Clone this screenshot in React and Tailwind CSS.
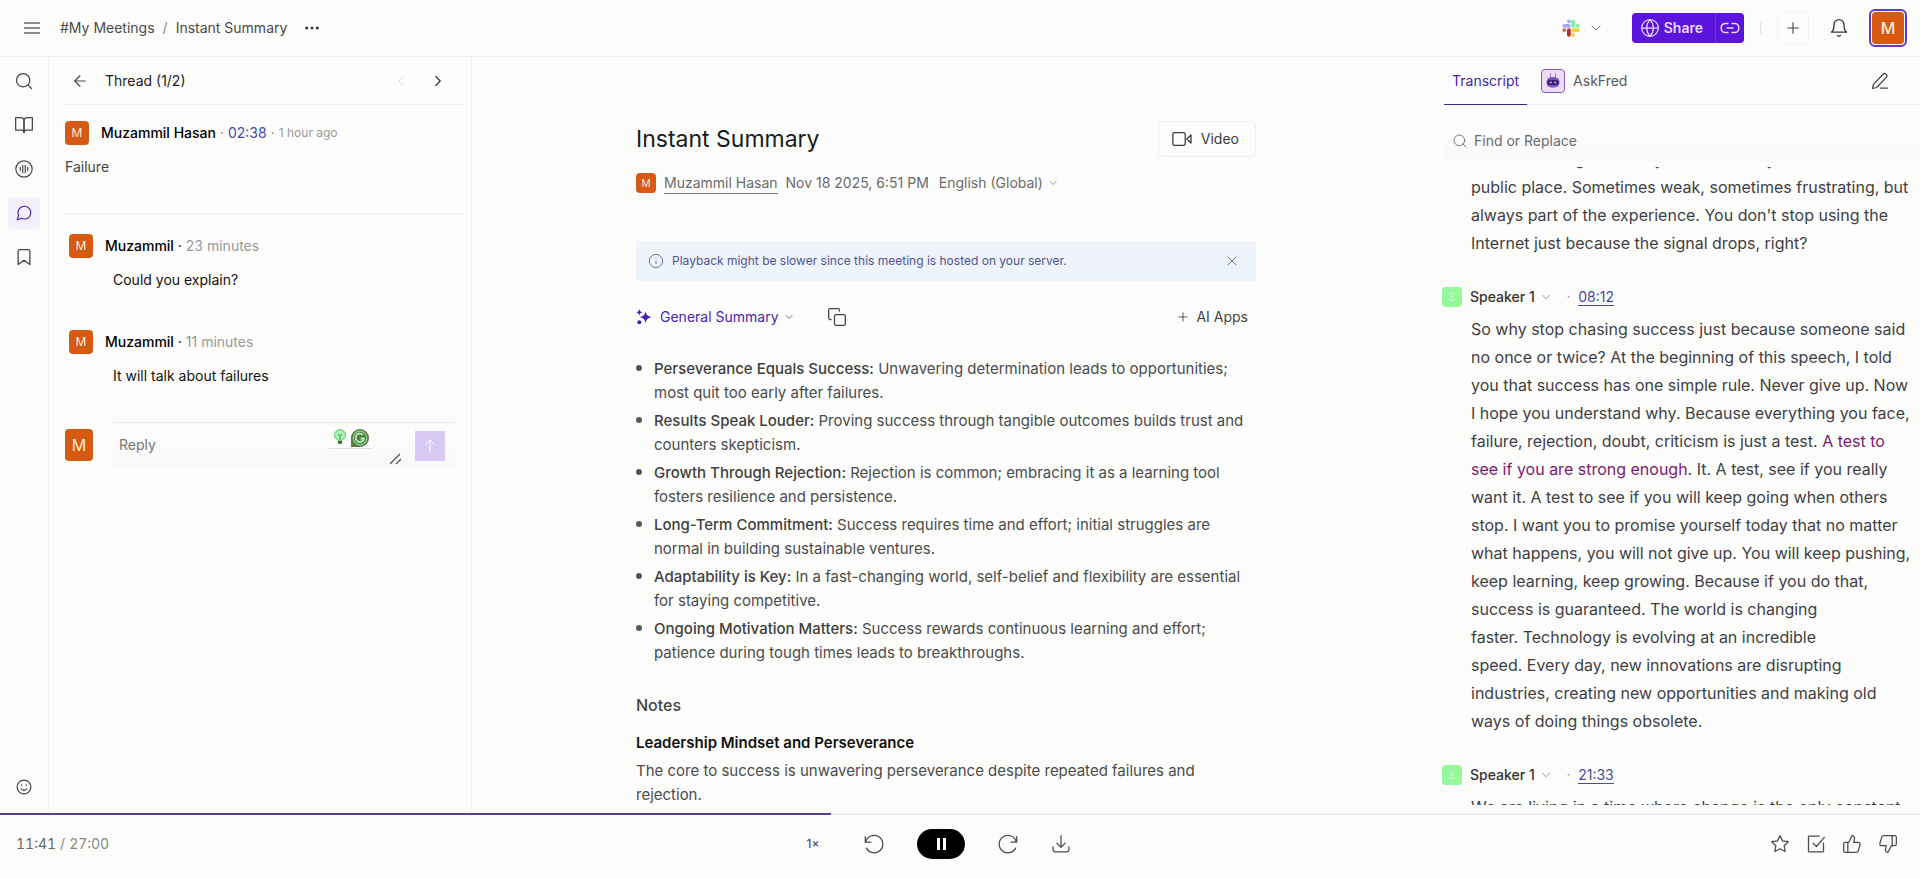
import { useState } from 'react';
import {
  FiArrowLeft,
  FiBell,
  FiBookmark,
  FiBookOpen,
  FiChevronDown,
  FiChevronLeft,
  FiChevronRight,
  FiCopy,
  FiGlobe,
  FiInfo,
  FiMessageCircle,
  FiMoreHorizontal,
  FiPlus,
  FiSearch,
  FiStar,
  FiX,
} from 'react-icons/fi';
import { ThumbsDown, ThumbsUp } from 'lucide-react';

const highlights = [
  {
    title: 'Perseverance Equals Success:',
    text: 'Unwavering determination leads to opportunities; most quit too early after failures.',
  },
  {
    title: 'Results Speak Louder:',
    text: 'Proving success through tangible outcomes builds trust and counters skepticism.',
  },
  {
    title: 'Growth Through Rejection:',
    text: 'Rejection is common; embracing it as a learning tool fosters resilience and persistence.',
  },
  {
    title: 'Long-Term Commitment:',
    text: 'Success requires time and effort; initial struggles are normal in building sustainable ventures.',
  },
  {
    title: 'Adaptability is Key:',
    text: 'In a fast-changing world, self-belief and flexibility are essential for staying competitive.',
  },
  {
    title: 'Ongoing Motivation Matters:',
    text: 'Success rewards continuous learning and effort; patience during tough times leads to breakthroughs.',
  },
];

const replies = [
  { id: 1, name: 'Muzammil', time: '23 minutes', text: 'Could you explain?' },
  { id: 2, name: 'Muzammil', time: '11 minutes', text: 'It will talk about failures' },
];

const Svg = ({ size = 18, children, ...rest }) => (
  <svg
    width={size}
    height={size}
    viewBox="0 0 24 24"
    fill="none"
    stroke="currentColor"
    strokeWidth={1.5}
    strokeLinecap="round"
    strokeLinejoin="round"
    aria-hidden="true"
    {...rest}
  >
    {children}
  </svg>
);

const SlackIcon = () => (
  <svg width="18" height="18" viewBox="0 0 24 24" aria-hidden="true">
    <g strokeWidth="5" strokeLinecap="round" fill="none">
      <path d="M3 9.2h6.2" stroke="#a5a8ee" />
      <path d="M9.2 3v.1" stroke="#a5a8ee" />
      <path d="M14.8 3v6.2" stroke="#7ef0a0" />
      <path d="M21 9.2h-.1" stroke="#7ef0a0" />
      <path d="M21 14.8h-6.2" stroke="#f0d23c" />
      <path d="M14.8 21v-.1" stroke="#f0d23c" />
      <path d="M9.2 21v-6.2" stroke="#a8322e" />
      <path d="M3 14.8h.1" stroke="#f0601e" />
    </g>
  </svg>
);

const VoiceIcon = () => (
  <Svg size={20} strokeWidth={1.4}>
    <circle cx="12" cy="12" r="9.8" />
    <path d="M7.6 10v4M10.5 7.5v9M13.5 7.5v9M16.4 10v4" />
  </Svg>
);

const SmileIcon = () => (
  <Svg size={18} strokeWidth={1.6}>
    <circle cx="12" cy="12" r="9.2" />
    <path d="M8.6 14.5c1 1.4 2.1 1.9 3.4 1.9s2.4-.5 3.4-1.9M8.8 9.2v.6M15.2 9.2v.6" />
  </Svg>
);

const VideoIcon = () => (
  <Svg size={22} strokeWidth={1.4}>
    <rect x="2" y="5" width="13.5" height="14" rx="1.8" />
    <path d="M21.8 7.6v8.8L17.2 12z" />
  </Svg>
);

const SparkleIcon = () => (
  <svg width="16" height="16" viewBox="0 0 24 24" fill="#4a1fae" aria-hidden="true">
    <path d="M14.5 3.5c1.2 5.7 3 7.5 9 8.7-6 1.2-7.8 3-9 8.8-1.2-5.8-3-7.6-9-8.8 6-1.2 7.8-3 9-8.7z" />
    <path d="M5 0c.7 3.3 1.7 4.3 5 5-3.3.7-4.3 1.7-5 5-.7-3.3-1.7-4.3-5-5 3.3-.7 4.3-1.7 5-5z" />
    <circle cx="5" cy="20" r="3" />
  </svg>
);

const RobotIcon = () => (
  <svg width="24" height="24" viewBox="0 0 24 24" aria-hidden="true">
    <rect x=".5" y=".5" width="23" height="23" rx="3.5" fill="#ecdcf8" stroke="#8658b8" />
    <path d="M9.5 4v4M14.5 4v4" stroke="#9a86c4" strokeWidth="1" />
    <path d="M5.5 13.5c0-4 2.8-5.5 6.5-5.5s6.5 1.5 6.5 5.5-2.8 5-6.5 5-6.5-1-6.5-5z" fill="#7a4fc4" />
    <rect x="6.5" y="11" width="11" height="5" rx="2.5" fill="#33206e" />
    <circle cx="9.8" cy="13.5" r="1" fill="#c9b5f2" />
    <circle cx="14.2" cy="13.5" r="1" fill="#c9b5f2" />
  </svg>
);

const LinkIcon = () => (
  <Svg size={20} strokeWidth={1.8}>
    <path d="M9.5 6.5h-3a5 5 0 0 0-5 5v1a5 5 0 0 0 5 5h3M14.5 6.5h3a5 5 0 0 1 5 5v1a5 5 0 0 1-5 5h-3M8.5 12h7" />
  </Svg>
);

const EditIcon = () => (
  <Svg size={20}>
    <path d="M3 21l1.2-5L16 3.6a2.1 2.1 0 0 1 3 0l.8.8a2.1 2.1 0 0 1 0 3L8 19.800 3 21zM12.5 20.5H21" />
  </Svg>
);

const RewindIcon = () => (
  <Svg size={22} strokeWidth={1.4}>
    <path d="M2.5 4v6h6M3 9.5a9.5 9.5 0 1 1 .7 7" />
  </Svg>
);

const ForwardIcon = () => (
  <Svg size={22} strokeWidth={1.4}>
    <path d="M21.5 4v6h-6M21 9.5a9.5 9.5 0 1 0-.7 7" />
  </Svg>
);

const DownloadIcon = () => (
  <Svg size={20}>
    <path d="M12 2v13.5M7 11l5 5 5-5M2.5 15.5V19A2.5 2.5 0 0 0 5 21.5h14a2.5 2.5 0 0 0 2.5-2.5v-3.5" />
  </Svg>
);

const TaskIcon = () => (
  <Svg size={20}>
    <path d="M21 11v9.5a1 1 0 0 1-1 1H4a1 1 0 0 1-1-1v-17a1 1 0 0 1 1-1h12M8.5 11l4 4L22 4" />
  </Svg>
);

const BulbIcon = () => (
  <svg width="14" height="16" viewBox="0 0 14 16" aria-hidden="true">
    <circle cx="7" cy="6" r="5.5" fill="#a5f5b0" stroke="#6fc47e" />
    <path d="M5 5l2 2 2-2M7 7v4" stroke="#4f9a5f" fill="none" />
    <path d="M4.5 12h5l-1 3h-3z" fill="#4c6b44" />
  </svg>
);

const GrammarlyIcon = () => (
  <svg width="18" height="18" viewBox="0 0 18 18" aria-hidden="true">
    <path d="M9 0a9 9 0 0 1 0 18H0V9a9 9 0 0 1 9-9z" fill="#5f7546" />
    <circle cx="9" cy="9" r="6.8" fill="none" stroke="#7edc8c" strokeWidth="1.2" />
    <path d="M12 6a4.2 4.2 0 1 0 1 3.5H9.5" fill="none" stroke="#a5f5b0" strokeWidth="1.8" />
  </svg>
);

const Avatar = ({ className = 'size-6 text-xs' }) => (
  <span className={`flex shrink-0 items-center justify-center rounded bg-[#d65a12] text-[#fdebd8] ${className}`}>M</span>
);

const railItems = [
  { label: 'Search', icon: <FiSearch size={20} strokeWidth={1.5} /> },
  { label: 'Chapters', icon: <FiBookOpen size={20} strokeWidth={1.5} /> },
  { label: 'Soundbites', icon: <VoiceIcon /> },
  { label: 'Comments', icon: <FiMessageCircle size={18} strokeWidth={1.6} />, active: true },
  { label: 'Bookmarks', icon: <FiBookmark size={20} strokeWidth={1.5} /> },
];

const Header = () => (
  <header className="flex h-[57px] shrink-0 items-center border-b border-[#eff0ee] pl-6 pr-[13px]">
    <button type="button" aria-label="Menu" className="text-[#666]">
      <svg width="16" height="12" viewBox="0 0 16 12" stroke="currentColor" strokeWidth="1.4" aria-hidden="true">
        <path d="M0 1h16M0 6h16M0 11h16" />
      </svg>
    </button>
    <nav aria-label="Breadcrumb" className="ml-5 flex gap-2 text-sm text-[#4b4b4b]">
      <a href="#meetings">#My Meetings</a>
      <span className="text-[#888]">/</span>
      <a href="#summary">Instant Summary</a>
    </nav>
    <button type="button" aria-label="More" className="ml-4 text-[#333]">
      <FiMoreHorizontal size={18} />
    </button>

    <div className="ml-auto flex items-center">
      <button type="button" aria-label="Slack" className="flex items-center gap-2 text-[#777]">
        <SlackIcon />
        <FiChevronDown size={16} strokeWidth={1.5} />
      </button>
      <div className="ml-7 flex h-[30px] items-center rounded-sm bg-[#5a14dc] text-[#e6dcfa]">
        <button type="button" className="flex h-full items-center gap-1 border-r border-[#6f35e0] pl-2 pr-3 text-sm font-semibold">
          <FiGlobe size={20} strokeWidth={1.5} />
          Share
        </button>
        <button type="button" aria-label="Copy link" className="px-1">
          <LinkIcon />
        </button>
      </div>
      <span className="mx-4 h-3 w-px bg-[#e2e2e2]" />
      <button type="button" aria-label="Add" className="flex size-8 items-center justify-center rounded border border-[#f4f5f3] text-[#444]">
        <FiPlus size={18} strokeWidth={1.5} />
      </button>
      <button type="button" aria-label="Notifications" className="mx-5 text-[#333]">
        <FiBell size={20} strokeWidth={1.6} />
      </button>
      <button type="button" aria-label="Account" className="rounded-md border-2 border-[#6238c4] p-px">
        <Avatar className="size-8 text-base font-medium" />
      </button>
    </div>
  </header>
);

const Rail = () => (
  <nav aria-label="Panels" className="flex w-12 shrink-0 flex-col items-center justify-between pb-2 pt-2">
    <div className="flex flex-col gap-3">
      {railItems.map((item) => (
        <button
          key={item.label}
          type="button"
          aria-label={item.label}
          className={`flex size-8 items-center justify-center rounded ${item.active ? 'bg-[#f4f0fb] text-[#4a2aa5]' : 'text-[#444]'}`}
        >
          {item.icon}
        </button>
      ))}
    </div>
    <button type="button" aria-label="Feedback" className="flex size-9 items-center justify-center text-[#444]">
      <SmileIcon />
    </button>
  </nav>
);

const ThreadPanel = () => (
  <section className="w-[424px] shrink-0 border-x border-[#f0f1ef] px-4">
    <div className="-mr-2 flex h-12 items-center border-b border-[#eeefed] pl-1.5 pr-4">
      <button type="button" aria-label="Back" className="text-[#444]">
        <FiArrowLeft size={18} strokeWidth={1.5} />
      </button>
      <h2 className="ml-4 text-sm text-[#1c1c1c]">Thread (1/2)</h2>
      <button type="button" aria-label="Previous thread" className="ml-auto text-[#dcdcdc]">
        <FiChevronLeft size={16} strokeWidth={1.5} />
      </button>
      <button type="button" aria-label="Next thread" className="ml-5 text-[#333]">
        <FiChevronRight size={18} strokeWidth={1.6} />
      </button>
    </div>

    <article className="-mr-2 h-[109px] border-b border-[#eeefed] pt-4">
      <div className="flex items-center gap-3">
        <Avatar />
        <p className="flex items-center gap-1 text-sm text-[#888]">
          <span className="font-medium text-black">Muzammil Hasan</span>
          <span>·</span>
          <a href="#t238" className="text-[#4a4a9c]">02:38</a>
          <span>·</span>
          <span className="text-xs text-[#999]">1 hour ago</span>
        </p>
      </div>
      <p className="mt-3 text-sm text-[#444]">Failure</p>
    </article>

    {replies.map((reply) => (
      <article key={reply.id} className="h-24 pl-1 pt-5">
        <div className="flex items-center gap-3">
          <Avatar />
          <p className="text-sm text-[#999]">
            <span className="font-medium text-black">{reply.name}</span>
            <span className="text-black"> · </span>
            {reply.time}
          </p>
        </div>
        <p className="ml-11 mt-3 text-sm text-[#111]">{reply.text}</p>
      </article>
    ))}

    <form className="mt-4 flex items-center gap-5" onSubmit={(e) => e.preventDefault()}>
      <Avatar className="h-8 w-7 text-base" />
      <div className="flex h-[46px] flex-1 items-center border-t border-[#eaebe9] bg-linear-to-b from-[#fbfcfa] to-[#f9f8fb] pr-2.5">
        <div className="relative h-full flex-1">
          <textarea
            aria-label="Reply"
            placeholder="Reply"
            className="block h-full w-full resize-none bg-transparent px-1.5 pt-3 text-sm outline-none placeholder:text-[#777]"
          />
          <span className="absolute right-7 top-1.5 flex gap-1 border-b border-[#e2e2e2] bg-[#fcfdfb] px-1 pb-px">
            <BulbIcon />
            <GrammarlyIcon />
          </span>
          <svg width="11" height="11" viewBox="0 0 11 11" stroke="#555" strokeWidth="1.3" className="absolute bottom-1 right-0" aria-hidden="true">
            <path d="M0 11L10 1M6 11l5-5" />
          </svg>
        </div>
        <button type="submit" aria-label="Send reply" className="ml-3.5 flex size-[30px] items-center justify-center bg-[#d8c9f4] text-white">
          <Svg size={16}>
            <path d="M12 21V3M5 10l7-7 7 7" />
          </Svg>
        </button>
      </div>
    </form>
  </section>
);

const Summary = () => (
  <main className="min-w-0 flex-1 overflow-hidden px-8">
    <div className="mx-auto max-w-[620px] pt-16">
      <div className="flex h-9 items-center justify-between">
        <h1 className="text-[23px] text-[#1a1a1a]">Instant Summary</h1>
        <button type="button" className="flex h-9 items-center gap-2 rounded border border-[#f0f1ef] pl-3 pr-4 text-sm text-[#3c3c3c]">
          <VideoIcon />
          Video
        </button>
      </div>
      <div className="mt-4 flex h-5 items-center text-sm text-[#6b6b6b]">
        <Avatar className="size-5 text-[10px]" />
        <a href="#owner" className="ml-2 border-b border-[#777] leading-5">Muzammil Hasan</a>
        <span className="ml-2">Nov 18 2025, 6:51 PM</span>
        <select aria-label="Language" className="ml-2.5 appearance-none bg-transparent field-sizing-content">
          <option>English (Global)</option>
        </select>
        <FiChevronDown size={12} strokeWidth={1.5} className="ml-1" />
      </div>

      <div className="mt-12 flex h-10 items-center bg-linear-to-b from-[#f0f2f9] to-[#ecf5fb] px-3 text-[#6b77a4]">
        <FiInfo size={16} strokeWidth={1.5} />
        <p className="ml-2 text-xs text-[#4f5592]">Playback might be slower since this meeting is hosted on your server.</p>
        <button type="button" aria-label="Dismiss" className="ml-auto mr-1">
          <FiX size={16} strokeWidth={1.5} />
        </button>
      </div>

      <div className="mt-6 flex h-6 items-center text-sm text-[#444]">
        <SparkleIcon />
        <select aria-label="Summary type" className="ml-2 appearance-none bg-transparent text-[#4a24a8] field-sizing-content">
          <option>General Summary</option>
        </select>
        <FiChevronDown size={12} strokeWidth={1.5} className="ml-1" />
        <button type="button" aria-label="Copy summary" className="ml-8">
          <FiCopy size={20} strokeWidth={1.5} />
        </button>
        <button type="button" className="ml-auto mr-2 flex items-center gap-1.5">
          <FiPlus size={14} strokeWidth={1.5} />
          AI Apps
        </button>
      </div>

      <ul className="mt-7 text-[15px] leading-6 text-[#4b4b4b]">
        {highlights.map((item) => (
          <li key={item.title} className="mb-1 flex gap-3">
            <span className="mt-2 size-1.5 shrink-0 rounded-full bg-[#555]" />
            <p>
              <strong className="font-medium text-[#404040]">{item.title}</strong> {item.text}
            </p>
          </li>
        ))}
      </ul>

      <h2 className="mt-7 text-base leading-6 font-medium text-[#444]">Notes</h2>
      <h3 className="mt-3.5 text-[15px] leading-6 font-semibold text-[#111]">Leadership Mindset and Perseverance</h3>
      <p className="mt-1 text-[15px] leading-6 text-[#4b4b4b]">
        The core to success is unwavering perseverance despite repeated failures and rejection.
      </p>
    </div>
  </main>
);

const transcript = [
  {
    id: 'a',
    lines: [
      'Failure is being on a rainy line inside any',
      'public place. Sometimes weak, sometimes frustrating, but',
      "always part of the experience. You don't stop using the",
      'Internet just because the signal drops, right?',
    ],
  },
  {
    id: 'b',
    time: '08:12',
    lines: [
      'So why stop chasing success just because someone said',
      'no once or twice? At the beginning of this speech, I told',
      'you that success has one simple rule. Never give up. Now',
      'I hope you understand why. Because everything you face,',
      ['failure, rejection, doubt, criticism is just a test. ', 'A test to', ''],
      ['', 'see if you are strong enough', '. It. A test, see if you really'],
      'want it. A test to see if you will keep going when others',
      'stop. I want you to promise yourself today that no matter',
      'what happens, you will not give up. You will keep pushing,',
      'keep learning, keep growing. Because if you do that,',
      'success is guaranteed. The world is changing',
      'faster. Technology is evolving at an incredible',
      'speed. Every day, new innovations are disrupting',
      'industries, creating new opportunities and making old',
      'ways of doing things obsolete.',
    ],
  },
  {
    id: 'c',
    time: '21:33',
    lines: ['We are living in a time where change is the only constant'],
  },
];

const Line = ({ line }) => {
  if (typeof line === 'string') {
    return <span className="block">{line}</span>;
  }

  const [before, marked, after] = line;
  return (
    <span className="block">
      {before}
      <mark className="bg-transparent text-[#7a1a6e]">{marked}</mark>
      {after}
    </span>
  );
};

const SpeakerHeader = ({ time }) => (
  <div className="mb-2 flex h-5 items-center">
    <span className="flex size-5 items-center justify-center rounded-sm bg-[#96f79c] text-[10px] text-[#c8fbcb]">S</span>
    <button type="button" className="ml-2 flex items-center gap-1 text-sm font-medium text-[#333]">
      Speaker 1
      <FiChevronDown size={14} strokeWidth={1.5} className="text-[#888]" />
    </button>
    <span className="ml-3.5 text-xs text-[#888]">·</span>
    <a href="#time" className="ml-2 border-b border-[#4a4a9c] text-sm leading-4 text-[#4a4a9c]">{time}</a>
  </div>
);

const Transcript = () => (
  <aside className="flex w-[500px] shrink-0 flex-col">
    <div className="ml-6 flex h-12 shrink-0 items-center border-b border-[#eff0ee] pr-[30px]">
      <button type="button" className="-mb-px h-12 border-b border-[#3d2a80] px-2 text-sm text-[#4a24a8]">Transcript</button>
      <button type="button" className="ml-3.5 flex items-center gap-2 text-sm text-[#5a5a5a]">
        <RobotIcon />
        AskFred
      </button>
      <button type="button" aria-label="Edit transcript" className="ml-auto text-[#444]">
        <EditIcon />
      </button>
    </div>
    <label className="ml-6 mt-4 flex h-10 shrink-0 items-center gap-1.5 bg-linear-to-b from-[#fcfdfb] to-[#f9f8fa] px-2 text-[#777]">
      <FiSearch size={16} strokeWidth={1.5} />
      <input
        type="text"
        aria-label="Find or Replace"
        placeholder="Find or Replace"
        className="flex-1 bg-transparent text-sm outline-none placeholder:text-[#6b6b6b]"
      />
    </label>
    <div className="mb-2 mt-1.5 flex min-h-0 flex-1 flex-col justify-end gap-[30px] overflow-hidden pl-[22px] text-base leading-7 text-[#3f3f46]">
      {transcript.map((block) => (
        <div key={block.id} className="last:-mb-4">
          {block.time && <SpeakerHeader time={block.time} />}
          <p className="ml-[29px] whitespace-nowrap">
            {block.lines.map((line, i) => (
              <Line key={i} line={line} />
            ))}
          </p>
        </div>
      ))}
    </div>
  </aside>
);

const Player = ({ current, total, onSeek }) => (
  <footer className="shrink-0">
    <input
      type="range"
      aria-label="Seek"
      min={0}
      max={total}
      value={current}
      onChange={(e) => onSeek(Number(e.target.value))}
      className="block h-0.5 w-full appearance-none [&::-webkit-slider-thumb]:size-0 [&::-webkit-slider-thumb]:appearance-none"
      style={{ background: `linear-gradient(to right, #5a3f94 ${(current / total) * 100}%, #eeefed 0)` }}
    />
    <div className="grid h-[63px] grid-cols-3 items-center px-4 pb-1.5 text-[#4b4b4b]">
      <p className="flex gap-1 text-sm tabular-nums text-[#888]">
        <span className="text-[#666]">11:41</span>
        <span>/</span>
        <span>27:00</span>
      </p>
      <div className="flex items-center justify-center gap-8 pr-[42px]">
        <button type="button" aria-label="Playback speed" className="pr-3 text-xs text-[#3d2a80]">1×</button>
        <button type="button" aria-label="Rewind"><RewindIcon /></button>
        <button type="button" aria-label="Pause" className="flex h-[30px] w-12 items-center justify-center gap-[3px] rounded-full bg-black">
          <span className="h-3 w-[3px] bg-white" />
          <span className="h-3 w-[3px] bg-white" />
        </button>
        <button type="button" aria-label="Forward"><ForwardIcon /></button>
        <button type="button" aria-label="Download"><DownloadIcon /></button>
      </div>
      <div className="flex items-center justify-end gap-4 pr-1.5">
        <button type="button" aria-label="Star"><FiStar size={20} strokeWidth={1.5} /></button>
        <button type="button" aria-label="Add task"><TaskIcon /></button>
        <button type="button" aria-label="Like"><ThumbsUp size={20} strokeWidth={1.5} /></button>
        <button type="button" aria-label="Dislike"><ThumbsDown size={20} strokeWidth={1.5} /></button>
      </div>
    </div>
  </footer>
);

const App = () => {
  const [current, setCurrent] = useState(701);

  return (
    <div className="flex h-screen flex-col overflow-hidden bg-[#fcfdfb] font-['Inter',sans-serif]">
      <Header />
      <div className="flex min-h-0 flex-1">
        <Rail />
        <ThreadPanel />
        <Summary />
        <Transcript />
      </div>
      <Player current={current} total={1620} onSeek={setCurrent} />
    </div>
  );
};

export default App;
